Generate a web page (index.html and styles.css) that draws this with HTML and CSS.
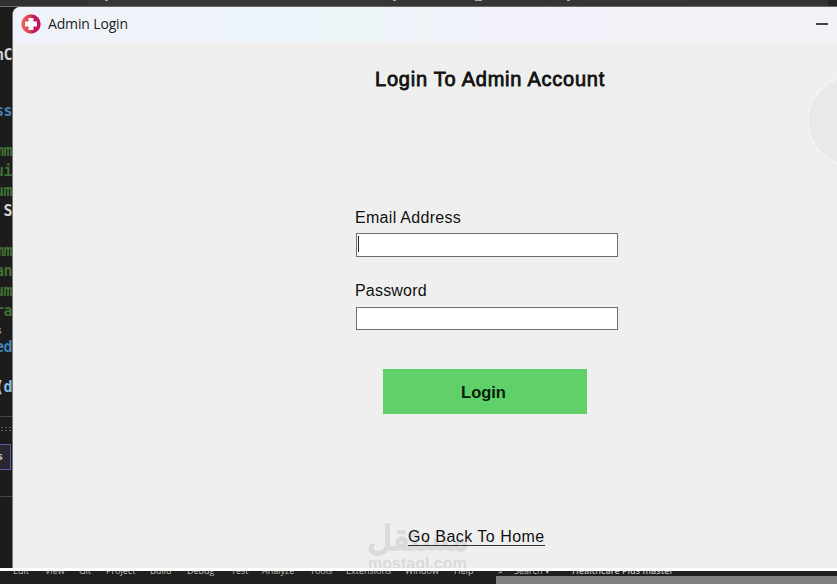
FILE: index.html
```html
<!DOCTYPE html>
<html lang="en">
<head>
    <meta charset="UTF-8">
    <meta name="viewport" content="width=device-width, initial-scale=1.0">
    <title>Admin Login</title>
    <link rel="stylesheet" href="styles.css">
</head>

<body>

    <div class="top-strip"><i class="m1"></i><i class="m2"></i><i class="m3"></i><i class="m4"></i></div>

    <div class="middle">
      <div class="editor">
        <div class="line white">nC</div>
        <div class="line"></div>
        <div class="lens"></div>
        <div class="line blue">ss</div>
        <div class="line"></div>
        <div class="line green">mm</div>
        <div class="line green">ui</div>
        <div class="line green">um</div>
        <div class="line white">S</div>
        <div class="line"></div>
        <div class="line green">mm</div>
        <div class="line green">an</div>
        <div class="line green">um</div>
        <div class="line green">ra</div>
        <div class="lens"><span>s</span></div>
        <div class="line blue">ed</div>
        <div class="line"></div>
        <div class="line light"><b>(</b>d</div>
        <div class="panel">
          <div class="dots"></div>
          <div class="tab">s</div>
        </div>
      </div>

      <div class="window">
        <div class="title-bar">
          <svg class="logo" width="20" height="20" viewBox="0 0 20 20">
            <defs>
              <linearGradient id="logoFill" x1="0" y1="0" x2="1" y2="0">
                <stop offset="0.1" stop-color="#ec5e54"/>
                <stop offset="0.5" stop-color="#d63b58"/>
                <stop offset="0.6" stop-color="#c9145f"/>
                <stop offset="1" stop-color="#c50f60"/>
              </linearGradient>
            </defs>
            <circle cx="10" cy="10" r="9.7" fill="url(#logoFill)"/>
            <path d="M7.5 4h5v3.5H16v5h-3.5V16h-5v-3.5H4v-5h3.5z" fill="#fff"/>
          </svg>
          <span class="title">Admin Login</span>
          <span class="minimize"></span>
        </div>

        <div class="content">
          <div class="circle"></div>
          <h1>Login To Admin Account</h1>

          <form class="login-form">
            <label class="email-label" for="email">Email Address</label>
            <div class="field" id="email"><span class="caret"></span></div>
            <label class="pass-label" for="password">Password</label>
            <div class="field" id="password"></div>
            <button class="login-btn" type="button">Login</button>
          </form>

          <div class="watermark">
            <div class="wm-ar" lang="ar">مستقل</div>
            <div class="wm-en">mostaql.com</div>
          </div>
          <a class="home-link">Go Back To Home</a>
        </div>
      </div>
    </div>

    <div class="white-line"></div>

    <div class="menu-bar">
      <div class="menu">
        <span class="w-edit">Edit</span>
        <span class="w-view">View</span>
        <span class="w-git">Git</span>
        <span class="w-project">Project</span>
        <span class="w-build">Build</span>
        <span class="w-debug">Debug</span>
        <span class="w-test">Test</span>
        <span class="w-analyze">Analyze</span>
        <span class="w-tools">Tools</span>
        <span class="w-ext">Extensions</span>
        <span class="w-window">Window</span>
        <span class="w-help">Help</span>
        <span class="w-icon">⌕</span>
        <span class="w-search">Search ▾</span>
        <span class="w-solution">Healthcare Plus master</span>
      </div>
      <div class="gray-bar"></div>
    </div>

</body>
</html>
```
FILE: styles.css
```css
* {
    box-sizing: border-box;
}

body {
    margin: 0;
    width: 837px;
    height: 584px;
    overflow: hidden;
    display: flex;
    flex-direction: column;
    background-color: #1e1e1e;
    font-family: "Liberation Sans", Arial, sans-serif;
}

.top-strip {
    height: 7px;
    flex: none;
    display: flex;
    background: linear-gradient(to right, #303030 88px, #383838 88px, #333 828px, #252525 828px);
    border-bottom: 1px solid #6b6b6b;
}

.top-strip i {
    height: 1px;
    background-color: #aaa;
}

.m1 { width: 3px; margin-left: 105px; }
.m2 { width: 3px; margin-left: 285px; }
.m3 { width: 7px; margin-left: 79px; }
.m4 { width: 3px; margin-left: 85px; }

.middle {
    display: flex;
    height: 561px;
    flex: none;
    background-color: #1c1c1c;
}

/* strip of code editor left of the window */
.editor {
    width: 12px;
    flex: none;
    padding-top: 38px;
    overflow: hidden;
    font-family: "DejaVu Sans Mono", monospace;
    font-size: 15px;
    font-weight: bold;
}

.line {
    height: 20px;
    line-height: 20px;
    display: flex;
    justify-content: flex-end;
    letter-spacing: -0.5px;
}

.lens {
    height: 16px;
    line-height: 20px;
    font-size: 10px;
    color: #9a8880;
}

.lens span {
    margin-left: -4px;
}

.white { color: #d4d4d4; }
.blue { color: #4482b8; }
.green { color: #426f35; }
.light { color: #82bfe4; }
.light b { color: #c8c8c8; }

.panel {
    margin-top: 19px;
    height: 81px;
    border-top: 1px solid #444;
    border-bottom: 1px solid #444;
}

.dots {
    height: 6px;
    margin: 9px 0 12px;
    background-image: radial-gradient(#606060 0.7px, transparent 0.8px);
    background-size: 4px 3px;
}

.tab {
    width: 11px;
    height: 26px;
    padding-right: 7px;
    display: flex;
    justify-content: flex-end;
    line-height: 24px;
    border: 1px solid #6455a5;
    border-left: 0;
    background-color: #29272f;
    color: #d0c6bd;
    font-size: 11px;
}

.window {
    flex: 1;
    display: flex;
    flex-direction: column;
    overflow: hidden;
    background-color: #efefef;
    border-left: 1px solid #777;
    border-radius: 8px 0 0 0;
}

.title-bar {
    height: 35px;
    flex: none;
    display: flex;
    align-items: center;
    padding: 0 9px 2px 8px;
    background: linear-gradient(to right, #eff3fb, #ecf4f8 42%, #f1f2f9 60%, #f3f2f9);
}

.title {
    margin-left: 7px;
    font-family: "Open Sans", "Noto Sans", sans-serif;
    font-size: 14px;
    letter-spacing: -0.15px;
    color: #222;
}

.minimize {
    width: 12px;
    height: 2px;
    margin-left: auto;
    background-color: #444;
}

.content {
    position: relative;
    flex: 1;
    overflow: hidden;
    color: #111;
}

.circle {
    position: absolute;
    left: 794px;
    top: 33px;
    width: 92px;
    height: 92px;
    border-radius: 50%;
    border: 2px solid #f2f2f2;
    background-color: #e9e9e9;
}

h1 {
    margin: 25px 0 0 362px;
    font-size: 20px;
    line-height: 24px;
    font-weight: normal;
    letter-spacing: 0.77px;
    -webkit-text-stroke: 0.8px #111;
    white-space: nowrap;
}

.login-form {
    display: flex;
    flex-direction: column;
    margin: 118px 0 0 342px;
    width: 263px;
}

label {
    font-size: 16px;
    line-height: 18px;
    letter-spacing: 0.3px;
}

.pass-label {
    margin-top: 25px;
    letter-spacing: 0.2px;
}

.field {
    width: 262px;
    height: 24px;
    margin: 6px 0 0 1px;
    padding: 2px 1px;
    border: 1px solid #6e6e6e;
    background-color: #fff;
}

.pass-label + .field {
    height: 23px;
    margin-top: 7px;
}

.caret {
    display: block;
    width: 1px;
    height: 16px;
    background-color: #222;
}

.login-btn {
    width: 204px;
    height: 45px;
    margin: 39px 0 0 28px;
    padding: 1px 3px 0 0;
    border: 0;
    background-color: #60d168;
    color: #071e08;
    font-family: inherit;
    font-size: 16.5px;
    font-weight: bold;
}

/* sits under the home link */
.watermark {
    position: absolute;
    left: 355px;
    top: 476px;
    width: 101px;
    color: #dadada;
    font-weight: bold;
}

.wm-ar {
    height: 37px;
    line-height: 40px;
    font-family: "DejaVu Sans", sans-serif;
    font-size: 34px;
    font-weight: normal;
    -webkit-text-stroke: 1.6px #dadada;
    direction: rtl;
    white-space: nowrap;
}

.wm-en {
    font-size: 16px;
    line-height: 18px;
}

.home-link {
    position: relative;
    display: block;
    width: max-content;
    margin: 114px 0 0 395px;
    border-bottom: 1px solid #333;
    font-size: 16px;
    line-height: 17px;
    letter-spacing: 0.48px;
}

.white-line {
    height: 3px;
    flex: none;
    background-color: #fff;
}

.menu-bar {
    height: 13px;
    flex: none;
    display: grid;
    overflow: hidden;
    background-color: #1f1f1f;
}

.menu, .gray-bar {
    grid-area: 1 / 1;
}

.menu {
    display: flex;
    height: 13px;
    overflow: hidden;
    padding-left: 13px;
    font-family: "Open Sans", sans-serif;
    font-size: 9px;
    line-height: 12px;
    color: #bdbdbd;
    white-space: nowrap;
}

/* only the lower half of the labels shows under the window */
.menu span {
    flex: none;
    margin-top: -6px;
}

.w-edit { width: 32px; }
.w-view { width: 34px; }
.w-git { width: 27px; }
.w-project { width: 44px; }
.w-build { width: 37px; }
.w-debug { width: 44px; }
.w-test { width: 31px; }
.w-analyze { width: 48px; }
.w-tools { width: 36px; }
.w-ext { width: 59px; }
.w-window { width: 49px; }
.w-help { width: 44px; }
.w-icon { width: 16px; }
.w-search { width: 58px; }

.w-solution {
    font-weight: 600;
}

.gray-bar {
    width: 341px;
    height: 8px;
    justify-self: end;
    align-self: end;
    background-color: #808080;
}
```
